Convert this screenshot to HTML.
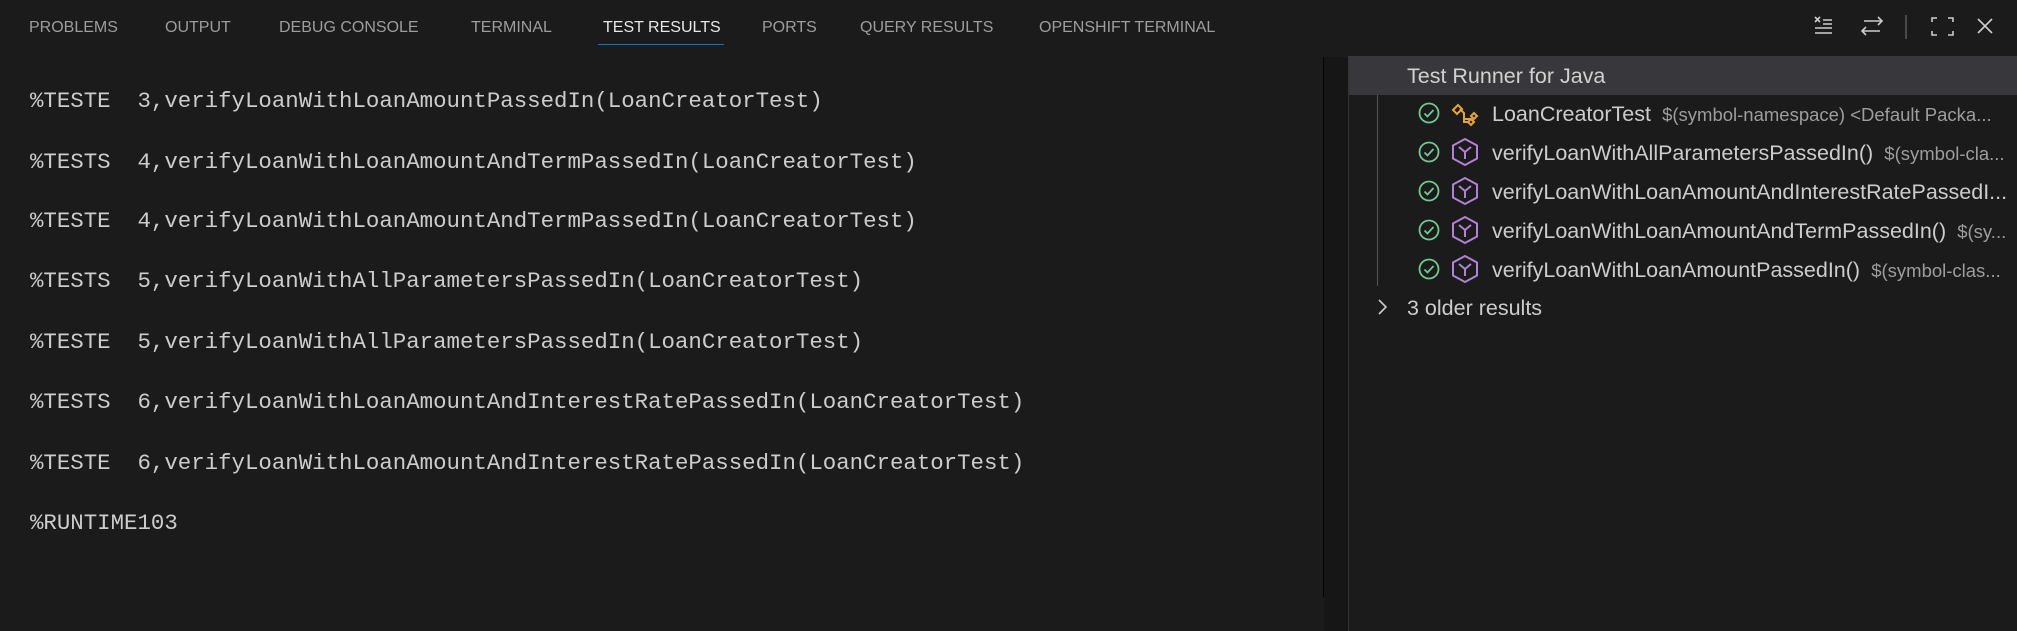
<!DOCTYPE html>
<html><head><meta charset="utf-8"><style>
*{margin:0;padding:0;box-sizing:border-box}
body{width:2017px;height:631px;background:#1b1b1b;position:relative;overflow:hidden;font-family:"Liberation Sans",sans-serif}
.tab{position:absolute;top:19px;font-size:16px;color:#9d9d9d}
.line{position:absolute;left:30px;font-family:"Liberation Mono",monospace;font-size:22.4px;color:#cccccc;white-space:pre;line-height:28px}
.row{position:absolute;left:1412px;font-size:21.5px;color:#cccccc;white-space:nowrap;line-height:28px;overflow:hidden;width:525px}
.desc{color:#9d9d9d;font-size:18.5px}
.ic{position:absolute}
</style></head><body>
<div class="tab" style="left:29px">PROBLEMS</div>
<div class="tab" style="left:165px">OUTPUT</div>
<div class="tab" style="left:279px">DEBUG CONSOLE</div>
<div class="tab" style="left:471px">TERMINAL</div>
<div class="tab" style="left:603px;color:#e7e7e7">TEST RESULTS</div>
<div style="position:absolute;left:598px;top:44px;width:126px;height:1px;background:#0078d4"></div>
<div class="tab" style="left:762px">PORTS</div>
<div class="tab" style="left:860px">QUERY RESULTS</div>
<div class="tab" style="left:1039px">OPENSHIFT TERMINAL</div>

<svg class="ic" style="left:1808px;top:12px" width="200" height="30" viewBox="0 0 200 30" fill="none" stroke="#cccccc" stroke-width="1.6">
<path d="M7 5l5 5M12 5l-5 5M15 8h9M15 12h9M7 16h17M7 21h17"/>
<path d="M56 9h18M70 5l4 4-4 4M72 19H54M58 15l-4 4 4 4"/>
<path d="M98 3v24" stroke="#555"/>
<path d="M124 10V6h5M140 6h5v4M145 19v4h-5M129 23h-5v-4"/>
<path d="M170 7l14 14M184 7l-14 14"/>
</svg>

<div class="line" style="top:87px">%TESTE  3,verifyLoanWithLoanAmountPassedIn(LoanCreatorTest)</div>
<div class="line" style="top:148px">%TESTS  4,verifyLoanWithLoanAmountAndTermPassedIn(LoanCreatorTest)</div>
<div class="line" style="top:207px">%TESTE  4,verifyLoanWithLoanAmountAndTermPassedIn(LoanCreatorTest)</div>
<div class="line" style="top:267px">%TESTS  5,verifyLoanWithAllParametersPassedIn(LoanCreatorTest)</div>
<div class="line" style="top:328px">%TESTE  5,verifyLoanWithAllParametersPassedIn(LoanCreatorTest)</div>
<div class="line" style="top:388px">%TESTS  6,verifyLoanWithLoanAmountAndInterestRatePassedIn(LoanCreatorTest)</div>
<div class="line" style="top:449px">%TESTE  6,verifyLoanWithLoanAmountAndInterestRatePassedIn(LoanCreatorTest)</div>
<div class="line" style="top:509px">%RUNTIME103</div>

<div style="position:absolute;left:1323px;top:57px;width:1px;height:540px;background:#050505"></div>
<div style="position:absolute;left:1324px;top:57px;width:24px;height:574px;background:#161616"></div>
<div style="position:absolute;left:1348px;top:56px;width:1px;height:575px;background:#333"></div>
<div style="position:absolute;left:1349px;top:56px;width:668px;height:39px;background:#38383c"></div>
<div class="row" style="top:62px;left:1407px;color:#d0d0d0">Test Runner for Java</div>
<div style="position:absolute;left:1377px;top:95px;width:1px;height:191px;background:#555"></div>

<svg class="ic" style="left:1415px;top:95px" width="80" height="200" viewBox="0 0 80 200" fill="none" stroke-width="1.8">
<g stroke="#73c991">
<circle cx="14" cy="18" r="9.5"/><path d="M9.5 18.5l3 3 6-6.5"/>
<circle cx="14" cy="57" r="9.5"/><path d="M9.5 57.5l3 3 6-6.5"/>
<circle cx="14" cy="96" r="9.5"/><path d="M9.5 96.5l3 3 6-6.5"/>
<circle cx="14" cy="135" r="9.5"/><path d="M9.5 135.5l3 3 6-6.5"/>
<circle cx="14" cy="174" r="9.5"/><path d="M9.5 174.5l3 3 6-6.5"/>
</g>
<g stroke="#e8a33d" stroke-width="2">
<path d="M38 15l5-5 4 4-5 5zM45 14l4 4v6h7M56 21l3-3 3 3-3 3zM49 24v3h4M53 27l3-3 3 3-3 3z"/>
</g>
<g stroke="#b180d7" stroke-width="2">
<path id="h" d="M50 44l12 6.5v13L50 70l-12-6.5v-13z M44 52l6 5 6-5 M50 57v7"/>
<use href="#h" y="39"/><use href="#h" y="78"/><use href="#h" y="117"/>
</g>
</svg>

<div class="row" style="top:100px;left:1492px">LoanCreatorTest <span class="desc">&nbsp;$(symbol-namespace) &lt;Default Packa...</span></div>
<div class="row" style="top:139px;left:1492px">verifyLoanWithAllParametersPassedIn() <span class="desc">&nbsp;$(symbol-cla...</span></div>
<div class="row" style="top:178px;left:1492px">verifyLoanWithLoanAmountAndInterestRatePassedI...</div>
<div class="row" style="top:217px;left:1492px">verifyLoanWithLoanAmountAndTermPassedIn() <span class="desc">&nbsp;$(sy...</span></div>
<div class="row" style="top:256px;left:1492px">verifyLoanWithLoanAmountPassedIn() <span class="desc">&nbsp;$(symbol-clas...</span></div>
<svg class="ic" style="left:1374px;top:296px" width="16" height="22" viewBox="0 0 16 22" fill="none" stroke="#cccccc" stroke-width="1.6"><path d="M5 4l7 7-7 7"/></svg>
<div class="row" style="top:294px;left:1407px">3 older results</div>
</body></html>
